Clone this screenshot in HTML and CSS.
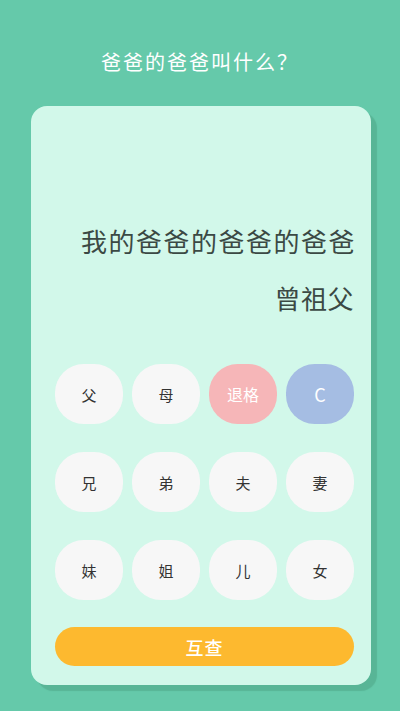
FILE: index.html
```html
<!DOCTYPE html>
<html lang="zh">
<head>
<meta charset="utf-8">
<title>亲戚计算器</title>
<link rel="stylesheet" href="styles.css">
</head>
<body>
<div class="page">
  <h1 class="title">爸爸的爸爸叫什么？</h1>
  <div class="card">
    <div class="display">
      <div class="expr">我的爸爸的爸爸的爸爸</div>
      <div class="result">曾祖父</div>
    </div>
    <div class="keypad">
      <button class="key">父</button>
      <button class="key">母</button>
      <button class="key key-back">退格</button>
      <button class="key key-clear">C</button>
      <button class="key">兄</button>
      <button class="key">弟</button>
      <button class="key">夫</button>
      <button class="key">妻</button>
      <button class="key">妹</button>
      <button class="key">姐</button>
      <button class="key">儿</button>
      <button class="key">女</button>
    </div>
    <button class="swap">互查</button>
  </div>
</div>
</body>
</html>
```

FILE: styles.css
```css
html, body {
  margin: 0;
  padding: 0;
  background: #65c9aa;
  font-family: "Noto Sans CJK SC", "Noto Sans", sans-serif;
}

.page {
  width: 400px;
  height: 711px;
  padding-top: 46px;
  box-sizing: border-box;
}

.title {
  margin: 0;
  height: 32px;
  line-height: 32px;
  text-align: center;
  font-size: 20px;
  font-weight: 400;
  color: #ffffff;
  letter-spacing: 2px;
}

.card {
  margin: 28px 0 0 31px;
  width: 340px;
  height: 579px;
  box-sizing: border-box;
  background: #d2f8ea;
  border-radius: 16px;
  box-shadow: 6px 6px 1px #58b596;
  padding: 0 17px 0 24px;
  display: flex;
  flex-direction: column;
}

.display {
  text-align: right;
  color: #3b4944;
  font-size: 26px;
  padding-top: 117px;
}

.expr {
  height: 36px;
  line-height: 36px;
  letter-spacing: 1.5px;
  margin-right: -2px;
}

.result {
  height: 36px;
  line-height: 36px;
  margin-top: 21px;
  letter-spacing: 0.5px;
}

.keypad {
  margin-top: 48px;
  display: grid;
  grid-template-columns: repeat(4, 1fr);
  grid-auto-rows: 60px;
  column-gap: 9px;
  row-gap: 28px;
}

.key {
  border: none;
  border-radius: 42% / 48%;
  background: #f7f7f7;
  color: #333333;
  font-family: inherit;
  font-size: 15px;
  padding: 0;
}

.key-back {
  background: #f6b6b8;
  color: #ffffff;
  font-size: 16px;
}

.key-clear {
  background: #a5bde3;
  color: #ffffff;
  font-size: 18px;
}

.swap {
  margin-top: 27px;
  height: 39px;
  border: none;
  border-radius: 20px;
  background: #fdb92f;
  color: #ffffff;
  font-family: inherit;
  font-size: 18px;
  font-weight: 500;
  letter-spacing: 1px;
  padding: 0;
}
```
